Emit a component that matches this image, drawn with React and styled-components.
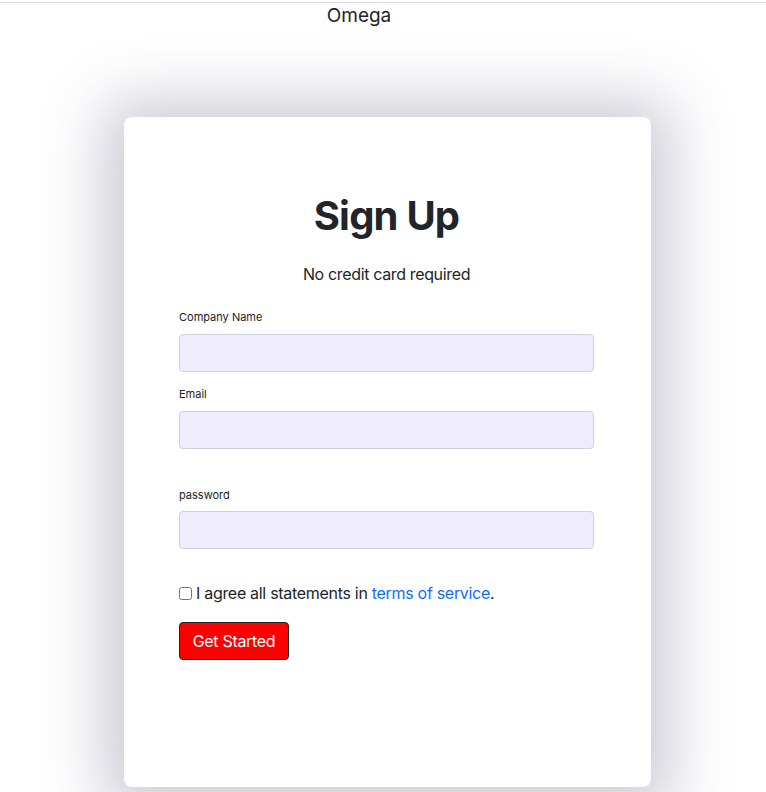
import React from "react";
import styled, { createGlobalStyle } from "styled-components";

const Global = createGlobalStyle`
  html, body { margin: 0; padding: 0; background: #fff; }
  body {
    font-family: Inter, "Noto Sans", sans-serif;
    color: #212529;
    overflow: hidden;
  }
  * { box-sizing: border-box; }
`;

const Page = styled.div`
  width: 766px;
  height: 792px;
  border-top: 1px solid #dcdcdc;
  margin-top: 2px;
  display: flex;
  flex-direction: column;
  align-items: center;
`;

const Brand = styled.div`
  width: 100%;
  padding-right: 48px;
  text-align: center;
  font-size: 19px;
  line-height: 24px;
  margin-top: 1px;
  color: #212529;
`;

const Card = styled.div`
  margin-top: 89px;
  margin-left: 9px;
  width: 527px;
  height: 670px;
  background: #fff;
  border-radius: 8px;
  box-shadow: 0 4px 60px 22px rgba(60, 50, 90, 0.25);
  padding: 75px 57px 0 55px;
  display: flex;
  flex-direction: column;
`;

const Title = styled.h1`
  margin: 0;
  text-align: center;
  font-size: 40px;
  line-height: 48px;
  font-weight: 700;
  letter-spacing: -0.8px;
  color: #212529;
`;

const Subtitle = styled.p`
  margin: 22px 0 0;
  text-align: center;
  font-size: 16px;
  line-height: 24px;
  letter-spacing: -0.35px;
`;

const Field = styled.div`
  display: flex;
  flex-direction: column;
  margin-top: ${(p) => p.$top}px;
`;

const Label = styled.label`
  font-size: 11px;
  line-height: 14px;
  color: #222;
  margin-bottom: ${(p) => p.$gap ?? 10}px;
`;

const Input = styled.input`
  width: 415px;
  height: 38px;
  background: #efedfd;
  border: 1px solid #cfd2dc;
  border-radius: 4px;
  outline: none;
`;

const AgreeRow = styled.label`
  display: flex;
  align-items: center;
  margin-top: 32px;
  font-size: 16px;
  line-height: 24px;
  letter-spacing: -0.3px;
  color: #212529;
`;

const Check = styled.input`
  width: 13px;
  height: 13px;
  margin: 0 4px 0 0;
`;

const Link = styled.a`
  color: #0d6efd;
  text-decoration: none;
`;

const Button = styled.button`
  margin-top: 17px;
  align-self: flex-start;
  width: 110px;
  height: 38px;
  background: #ff0000;
  color: #fff;
  border: 1px solid #222;
  border-radius: 4px;
  font-family: Inter, "Noto Sans", sans-serif;
  font-size: 16px;
  letter-spacing: -0.3px;
  padding: 0;
`;

export default function App() {
  return (
    <>
      <Global />
      <Page>
        <Brand>Omega</Brand>
        <Card>
          <Title>Sign Up</Title>
          <Subtitle>No credit card required</Subtitle>
          <Field $top={24}>
            <Label>Company Name</Label>
            <Input type="text" />
          </Field>
          <Field $top={15}>
            <Label $gap={10}>Email</Label>
            <Input type="email" />
          </Field>
          <Field $top={39}>
            <Label $gap={9}>password</Label>
            <Input type="password" />
          </Field>
          <AgreeRow>
            <Check type="checkbox" />
            <span>
              I agree all statements in <Link href="#">terms of service</Link>.
            </span>
          </AgreeRow>
          <Button>Get Started</Button>
        </Card>
      </Page>
    </>
  );
}
